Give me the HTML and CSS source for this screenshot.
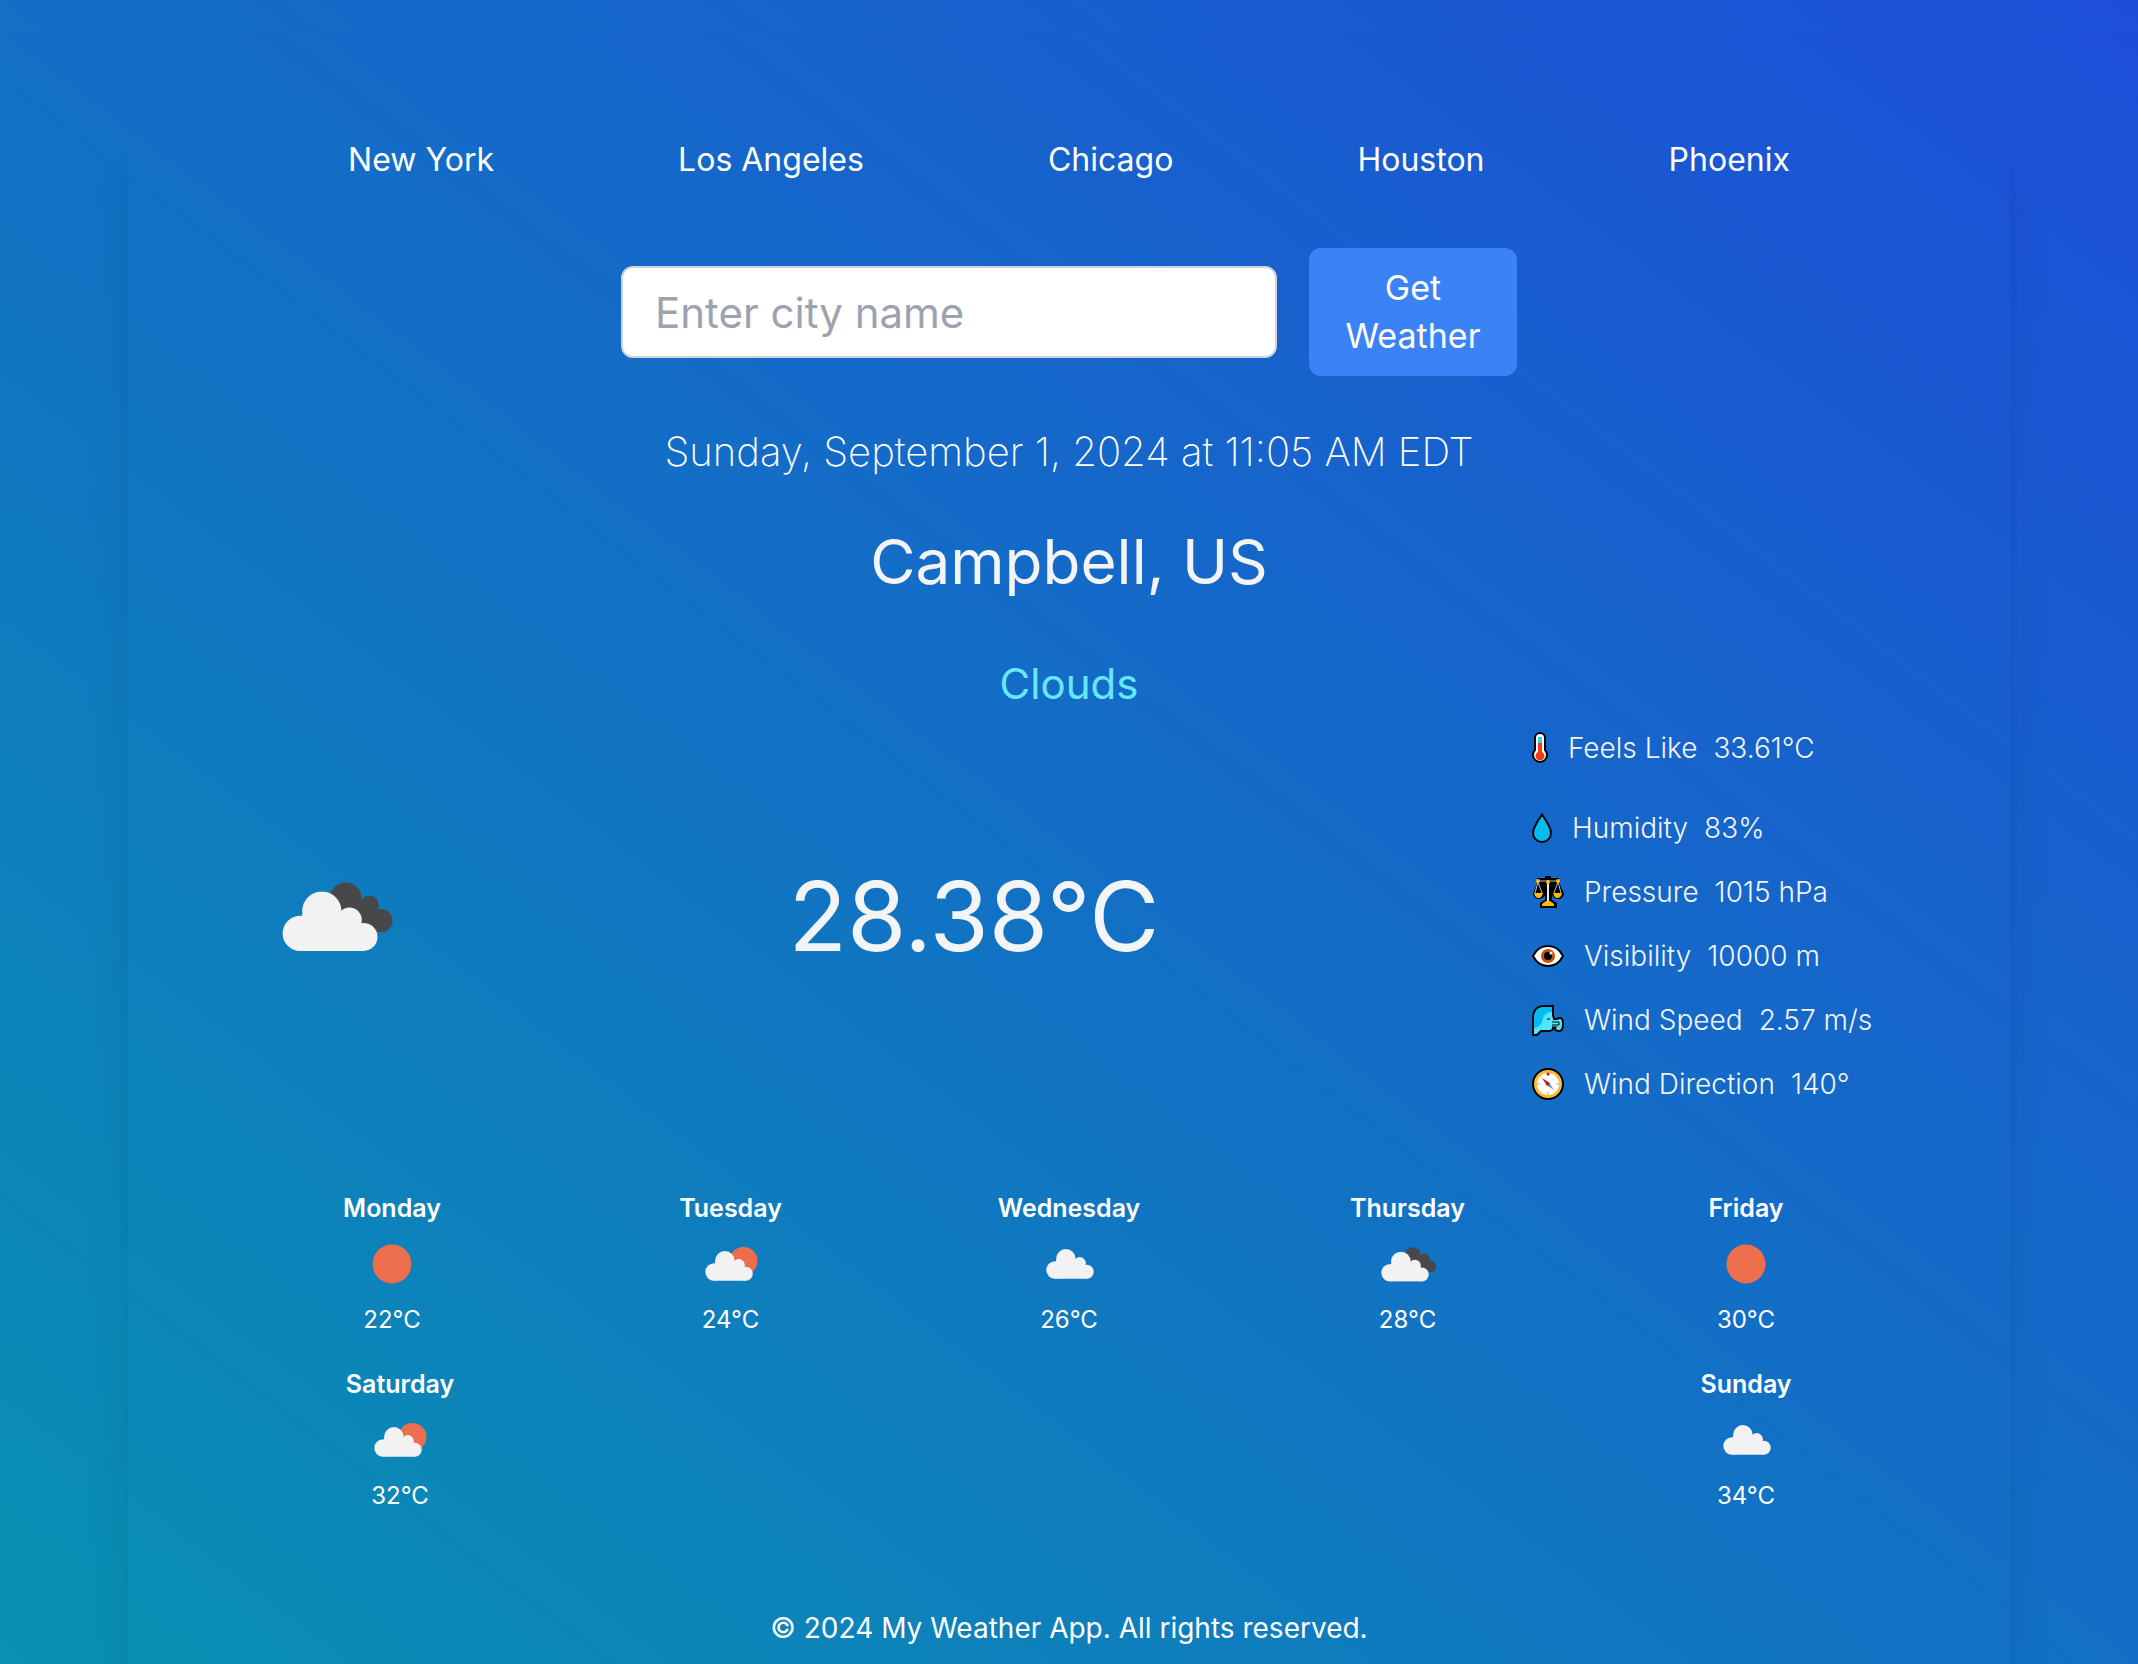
FILE: index.html
```html
<!DOCTYPE html>
<html lang="en">
<head>
<meta charset="utf-8">
<meta name="viewport" content="width=device-width, initial-scale=1">
<title>My Weather App</title>
<link rel="stylesheet" href="styles.css">
</head>
<body>
<svg class="sprite" aria-hidden="true">
  <symbol id="cloud" viewBox="0 0 95 60">
    <circle cx="39.300" cy="19.700" r="19.600"/>
    <circle cx="17.700" cy="42" r="17.600"/>
    <circle cx="67" cy="28.500" r="12.300"/>
    <circle cx="81" cy="45.500" r="14"/>
    <path d="M17.700 40L20 22H60L70 30L81 40V59.500H17.700Z"/>
  </symbol>
  <symbol id="sun" viewBox="0 0 64 64">
    <circle cx="32" cy="32" r="19.500" fill="#ec6e4c"/>
  </symbol>
  <symbol id="plain-cloud" viewBox="0 0 64 64">
    <use href="#cloud" x="9" y="17" width="48" height="30" fill="#f2f2f2"/>
  </symbol>
  <symbol id="partly-cloudy" viewBox="0 0 64 64">
    <circle cx="44.500" cy="29" r="14" fill="#ec6e4c"/>
    <use href="#cloud" x="6" y="19" width="48" height="30" fill="#f2f2f2"/>
  </symbol>
  <symbol id="overcast" viewBox="0 0 64 64">
    <g fill="#48484a">
      <circle cx="36.800" cy="23.200" r="8"/>
      <circle cx="48.700" cy="26.500" r="4.700"/>
      <circle cx="54.500" cy="34.300" r="5.800"/>
      <path d="M36 24H50L55 40H48L36 34Z"/>
    </g>
    <use href="#cloud" x="5" y="19.700" width="48" height="30" fill="#f2f2f2"/>
  </symbol>
</svg>

<main class="panel">
  <nav class="cities" aria-label="Cities">
    <a href="#new-york">New York</a>
    <a href="#los-angeles">Los Angeles</a>
    <a href="#chicago">Chicago</a>
    <a href="#houston">Houston</a>
    <a href="#phoenix">Phoenix</a>
  </nav>

  <form class="search">
    <input type="text" name="city" placeholder="Enter city name" aria-label="City name">
    <button type="submit">Get Weather</button>
  </form>

  <p class="date">Sunday, September 1, 2024 at 11:05 AM EDT</p>
  <h1 class="place">Campbell, US</h1>
  <p class="condition">Clouds</p>

  <section class="current" aria-label="Current weather">
    <svg class="current-icon" aria-hidden="true"><use href="#overcast"/></svg>
    <p class="temperature">28.38°C</p>
    <ul class="details">
      <li class="feels">
        <svg width="16" height="32" viewBox="0 0 16 32" aria-hidden="true">
          <path d="M3 6a5 5 0 0 1 10 0v12a7 7 0 1 1-10 0Z" fill="#fff" stroke="#000" stroke-width="2"/>
          <path d="M6 5h4v7H6Z" fill="#32d2f5"/><path d="M6 11h4v9a4.500 4.500 0 1 1-4 0Z" fill="#f03a17"/>
        </svg>
        <span>Feels Like</span><span>33.61°C</span>
      </li>
      <li>
        <svg width="20" height="32" viewBox="0 0 20 32" aria-hidden="true">
          <path d="M10 2.500Q19 15.500 19 21a9 9 0 0 1-18 0Q1 15.500 10 2.500Z" fill="#00bcf2" stroke="#000" stroke-width="2"/>
        </svg>
        <span>Humidity</span><span>83%</span>
      </li>
      <li>
        <svg width="32" height="32" viewBox="0 0 32 32" aria-hidden="true">
          <path d="M5 2h8V0h6v2h8v4l5 12q-1 5-6 5-4 0-6-4v5l5 3v5H8v-5l5-3v-5q-2 4-6 4-5 0-6-5L5 7Z" fill="#000"/>
          <path d="M6 5h20M6 6 3 17M6 6l4 11M26 6l-4 11M26 6l3 11" fill="none" stroke="#bbb" stroke-width="1"/>
          <path d="M16 4v22" stroke="#e5e5e5" stroke-width="2"/>
          <path d="M2 17h9q-1 5-4.500 5T2 17Zm19 0h9q-1 5-4.500 5T21 17ZM10 28l4-3h4l4 3v2H10Z" fill="#ffb900"/>
          <circle cx="6" cy="5" r="2" fill="#ffb900"/><circle cx="26" cy="5" r="2" fill="#ffb900"/><circle cx="16" cy="6" r="2" fill="#ffb900"/>
        </svg>
        <span>Pressure</span><span>1015 hPa</span>
      </li>
      <li>
        <svg width="32" height="32" viewBox="0 0 32 32" aria-hidden="true">
          <path d="M1 16Q6 6 16 6t15 10Q26 26 16 26T1 16Z" fill="#fff" stroke="#000" stroke-width="2"/>
          <circle cx="16" cy="16" r="7" fill="#ca5010"/><circle cx="16" cy="16" r="4" fill="#000"/><circle cx="19" cy="13" r="1.500" fill="#fff"/>
        </svg>
        <span>Visibility</span><span>10000 m</span>
      </li>
      <li>
        <svg width="32" height="32" viewBox="0 0 32 32" aria-hidden="true">
          <path d="M1 30V15Q1 2 13 2h8v9l1 4h3q1-1 3-1 3 0 3 6 0 7-4 7-4 0-4-3h-2q0 3-5 3h-7l-4 4H1Z" fill="#50e6ff" stroke="#000" stroke-width="2"/>
          <path d="M2 24V15Q2 3 13 3h7v5q-7 0-9 6-1 9-9 10Z" fill="#00bcf2"/>
          <path d="M15 15h3M20 18h7v3h-7M20 23h5" fill="none" stroke="#000" stroke-width="1"/>
        </svg>
        <span>Wind Speed</span><span>2.57 m/s</span>
      </li>
      <li>
        <svg width="32" height="32" viewBox="0 0 32 32" aria-hidden="true">
          <circle cx="16" cy="16" r="15" fill="#ffb932" stroke="#000" stroke-width="2"/>
          <circle cx="16" cy="16" r="11" fill="#fff"/>
          <path d="M16 5v3M16 24v3M5 16h3M24 16h3" stroke="#aaa" stroke-width="1"/>
          <path d="m10 10 8 5-3 3Z" fill="#e81224"/><path d="m22 22-8-5 3-3Z" fill="#999"/><circle cx="16" cy="6" r="1.500" fill="#e81224"/><circle cx="16" cy="16" r="1.500" fill="#444"/>
        </svg>
        <span>Wind Direction</span><span>140°</span>
      </li>
    </ul>
  </section>

  <section class="forecast" aria-label="Seven-day forecast">
    <article class="day"><h2>Monday</h2><svg aria-hidden="true"><use href="#sun"/></svg><p>22°C</p></article>
    <article class="day"><h2>Tuesday</h2><svg aria-hidden="true"><use href="#partly-cloudy"/></svg><p>24°C</p></article>
    <article class="day"><h2>Wednesday</h2><svg aria-hidden="true"><use href="#plain-cloud"/></svg><p>26°C</p></article>
    <article class="day"><h2>Thursday</h2><svg aria-hidden="true"><use href="#overcast"/></svg><p>28°C</p></article>
    <article class="day"><h2>Friday</h2><svg aria-hidden="true"><use href="#sun"/></svg><p>30°C</p></article>
    <article class="day saturday"><h2>Saturday</h2><svg aria-hidden="true"><use href="#partly-cloudy"/></svg><p>32°C</p></article>
    <article class="day sunday"><h2>Sunday</h2><svg aria-hidden="true"><use href="#plain-cloud"/></svg><p>34°C</p></article>
  </section>

  <footer>© 2024 My Weather App. All rights reserved.</footer>
</main>
</body>
</html>
```

FILE: styles.css
```css
* {
  box-sizing: border-box;
  margin: 0;
  padding: 0;
}

html {
  min-height: 100%;
  padding-top: 32px;
  background: linear-gradient(to top right, #0891b2, #1d4ed8);
}

body {
  padding-top: 104px;
  background: linear-gradient(to top right, #0891b2, #1d4ed8);
  font-family: Inter, "Open Sans", sans-serif;
  color: #fff;
}

.sprite {
  position: absolute;
  width: 0;
  height: 0;
}

.panel {
  margin: 0 128px;
  padding: 0 128px 16px;
  box-shadow: 0 40px 50px -10px rgb(0 0 0 / 10%), 0 16px 20px -12px rgb(0 0 0 / 10%);
}

.cities {
  display: flex;
  justify-content: space-around;
  font-size: 32px;
  line-height: 48px;
}

.cities a {
  color: inherit;
  text-decoration: none;
}

.search {
  display: flex;
  justify-content: center;
  align-items: center;
  gap: 32px;
  margin-top: 64px;
}

.search input {
  width: 656px;
  height: 92px;
  padding: 0 32px;
  border: 2px solid #d1d5db;
  border-radius: 12px;
  background: #fff;
  color: #111827;
  font: 42px/56px Inter, "Open Sans", sans-serif;
}

.search input::placeholder {
  color: #9ca3af;
}

.search button {
  width: 208px;
  padding: 16px 32px;
  border: 0;
  border-radius: 12px;
  background: #3b82f6;
  color: #fff;
  font: 34px/48px Inter, "Open Sans", sans-serif;
}

.date {
  margin-top: 48px;
  font-size: 40px;
  font-weight: 200;
  line-height: 56px;
  text-align: center;
}

.place {
  margin-top: 44px;
  font-size: 62px;
  font-weight: 400;
  line-height: 76px;
  text-align: center;
  color: #f3f4f6;
}

.condition {
  margin-top: 56px;
  font-size: 42px;
  line-height: 56px;
  text-align: center;
  color: #67e8f9;
}

.current {
  display: flex;
  justify-content: space-between;
  align-items: center;
  margin-top: 16px;
  color: #f3f4f6;
}

.current-icon {
  width: 128px;
  height: 128px;
  margin: 16px;
}

.temperature {
  font-size: 96px;
  line-height: 96px;
}

.details {
  display: flex;
  flex-direction: column;
  gap: 24px;
  width: 350px;
  list-style: none;
  font-size: 28px;
  font-weight: 300;
  line-height: 40px;
  white-space: nowrap;
}

.details li {
  display: flex;
  align-items: center;
}

.details .feels {
  margin-bottom: 16px;
}

.details svg {
  margin-right: 20px;
}

.details span + span {
  margin-left: 16px;
}

.forecast {
  display: grid;
  grid-template-columns: repeat(5, 144px);
  justify-content: space-between;
  row-gap: 28px;
  margin-top: 86px;
  padding: 0 64px;
  font-size: 24px;
  line-height: 36px;
}

.day {
  display: flex;
  flex-direction: column;
  align-items: center;
  gap: 6px;
}

.day h2 {
  font-size: 25px;
  font-weight: 600;
  line-height: 36px;
}

.day svg {
  width: 64px;
  height: 64px;
}

.saturday {
  width: 160px;
}

.sunday {
  grid-column: 5;
}

footer {
  margin-top: 94px;
  font-size: 28px;
  line-height: 40px;
  text-align: center;
}
```
